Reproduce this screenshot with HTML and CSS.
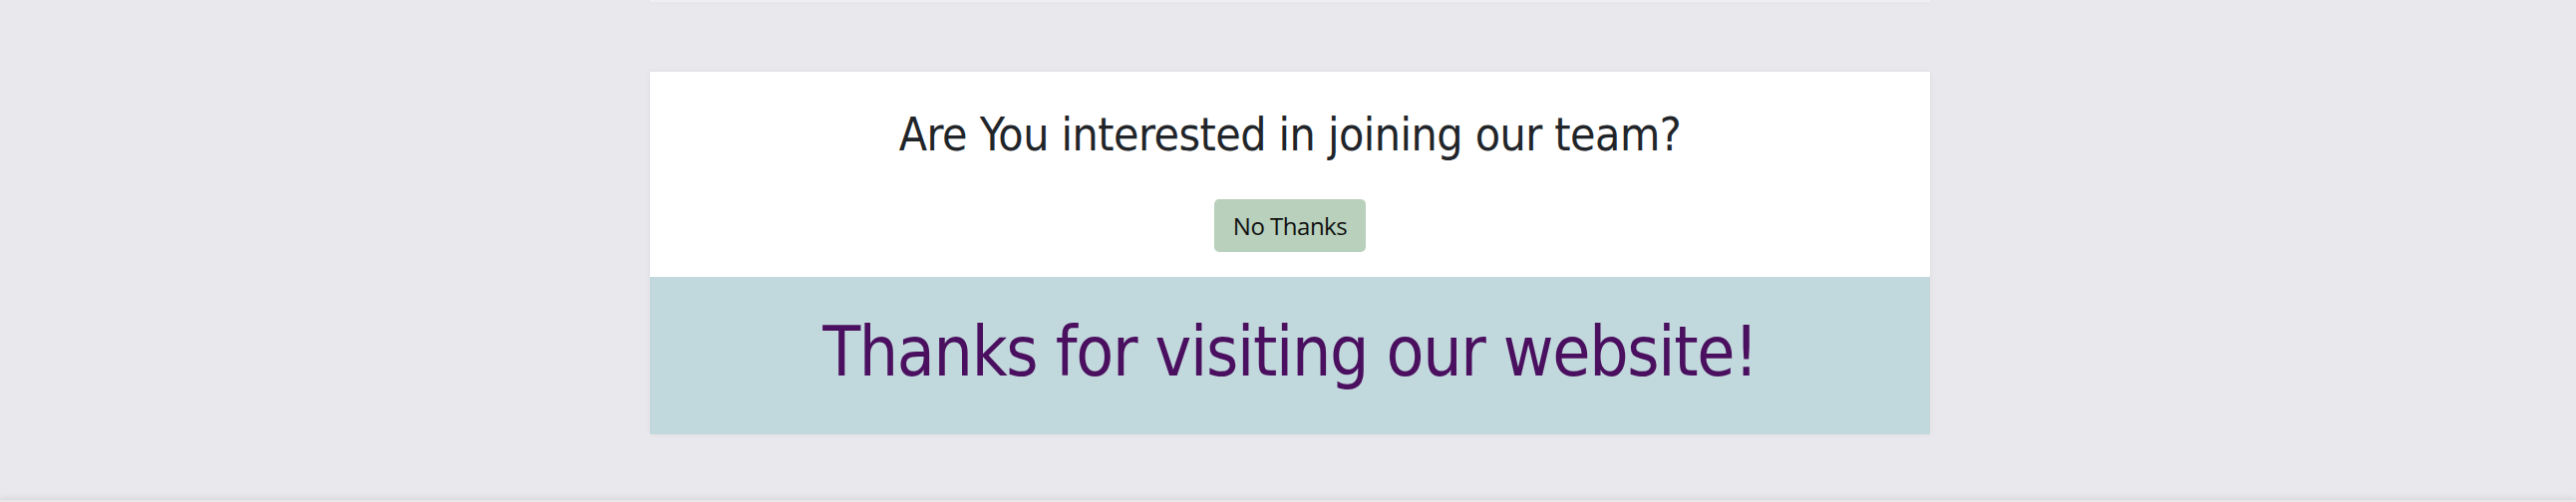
FILE: index.html
```html
<!DOCTYPE html>
<html lang="en">
<head>
<meta charset="utf-8">
<title>Join our team</title>
<link rel="stylesheet" href="styles.css">
</head>
<body>
<div class="page">
  <div class="top-strip"></div>
  <section class="card">
    <div class="card-invite">
      <h2 class="invite-title">Are You interested in joining our team?</h2>
      <button class="btn-nothanks" type="button">No Thanks</button>
    </div>
    <div class="card-thanks">
      <h1 class="thanks-title">Thanks for visiting our website!</h1>
    </div>
  </section>
</div>
<footer class="footer"></footer>
</body>
</html>
```

FILE: styles.css
```css
html, body {
  margin: 0;
  padding: 0;
  background: #e9e8ed;
}

.page {
  display: flex;
  flex-direction: column;
  align-items: center;
  padding-left: 4px;
}

.top-strip {
  width: 1284px;
  height: 2px;
  background: #f0eff3;
  box-shadow: 0 0 6px rgba(0, 0, 0, 0.05);
}

.card {
  width: 1284px;
  margin-top: 70px;
  box-shadow: 0 0 6px rgba(0, 0, 0, 0.06);
}

.card-invite {
  background: #ffffff;
  display: flex;
  flex-direction: column;
  align-items: center;
  padding: 36px 0 25px;
}

.invite-title {
  margin: 0;
  font-family: "DejaVu Sans Condensed", "Open Sans", sans-serif;
  font-weight: 400;
  font-size: 46px;
  line-height: 55px;
  letter-spacing: -0.5px;
  color: #212529;
}

.btn-nothanks {
  margin-top: 37px;
  height: 53px;
  padding: 0 19px;
  border: none;
  border-radius: 5px;
  background: #b8d0bc;
  color: #111111;
  font-family: "Open Sans", sans-serif;
  font-size: 24px;
  letter-spacing: -0.5px;
  display: inline-flex;
  align-items: center;
}

.card-thanks {
  background: #c1d9dc;
  display: flex;
  justify-content: center;
  padding: 34px 0 41px;
}

.thanks-title {
  margin: 0;
  font-family: "DejaVu Sans Condensed", "Open Sans", sans-serif;
  font-weight: 400;
  font-size: 69px;
  line-height: 83px;
  letter-spacing: -1.3px;
  color: #4b0f5f;
}

.footer {
  margin-top: 66px;
  height: 40px;
  background: #e9e8ed;
  box-shadow: 0 -2px 6px rgba(0, 0, 0, 0.08);
}
```
